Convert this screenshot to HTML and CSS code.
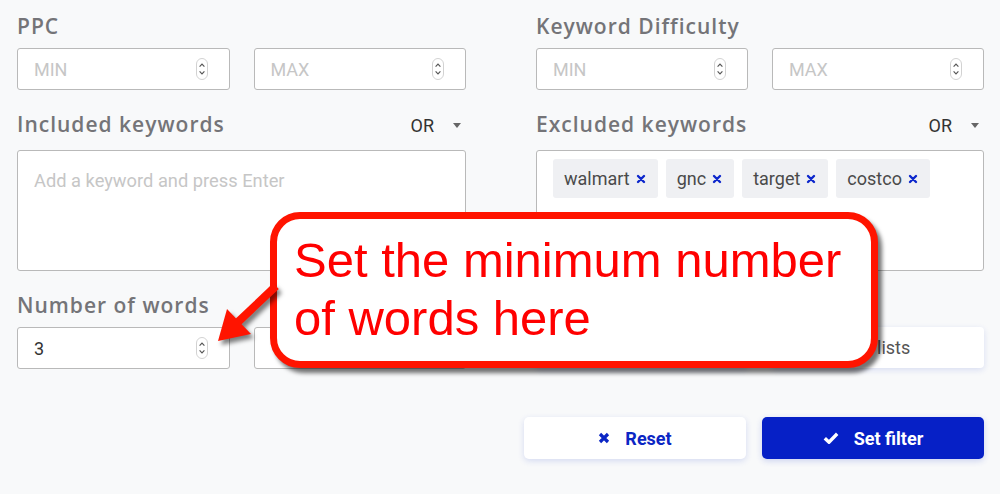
FILE: index.html
```html
<!DOCTYPE html>
<html lang="en">
<head>
    <meta charset="UTF-8">
    <meta name="viewport" content="width=device-width, initial-scale=1.0">
    <title>Keyword Filters</title>
    <link rel="stylesheet" href="styles.css">
</head>
<body>
    <svg width="0" height="0" class="defs">
        <symbol id="spin" viewBox="0 0 12 22">
            <rect x="0.5" y="0.5" width="11" height="21" rx="5.5" fill="#fff" stroke="#d2d2d2"/>
            <path d="M3.6 8.6 6 6.2 8.4 8.6M3.6 13.4 6 15.8 8.4 13.4" fill="none" stroke="#555" stroke-width="1.2"/>
        </symbol>
        <symbol id="cross" viewBox="0 0 10 10">
            <path d="M2 2 8 8M8 2 2 8" fill="none" stroke="currentColor" stroke-width="2.4" stroke-linecap="round"/>
        </symbol>
    </svg>

    <div class="filters">
        <div class="field">
            <label class="label">PPC</label>
            <div class="range">
                <div class="num-input"><span class="placeholder">MIN</span><svg class="spin"><use href="#spin"/></svg></div>
                <div class="num-input"><span class="placeholder">MAX</span><svg class="spin"><use href="#spin"/></svg></div>
            </div>
        </div>
        <div class="field">
            <label class="label">Keyword Difficulty</label>
            <div class="range">
                <div class="num-input"><span class="placeholder">MIN</span><svg class="spin"><use href="#spin"/></svg></div>
                <div class="num-input"><span class="placeholder">MAX</span><svg class="spin"><use href="#spin"/></svg></div>
            </div>
        </div>

        <div class="field">
            <div class="field-head">
                <label class="label">Included keywords</label>
                <div class="mode">OR <span class="caret"></span></div>
            </div>
            <div class="tag-box">
                <span class="placeholder">Add a keyword and press Enter</span>
            </div>
        </div>
        <div class="field">
            <div class="field-head">
                <label class="label">Excluded keywords</label>
                <div class="mode">OR <span class="caret"></span></div>
            </div>
            <div class="tag-box">
                <span class="tag">walmart <svg class="tag-x"><use href="#cross"/></svg></span>
                <span class="tag">gnc <svg class="tag-x"><use href="#cross"/></svg></span>
                <span class="tag">target <svg class="tag-x"><use href="#cross"/></svg></span>
                <span class="tag">costco <svg class="tag-x"><use href="#cross"/></svg></span>
            </div>
        </div>

        <div class="field">
            <label class="label">Number of words</label>
            <div class="range">
                <div class="num-input"><span class="value">3</span><svg class="spin"><use href="#spin"/></svg></div>
                <div class="num-input"></div>
            </div>
        </div>
        <div class="field">
            <div class="label-spacer"></div>
            <div class="range">
                <button class="list-btn"></button>
                <button class="list-btn"><span class="list-text">lists</span></button>
            </div>
        </div>
    </div>

    <div class="actions">
        <button class="btn btn-reset">
            <svg class="btn-icon" viewBox="0 0 12 12"><path d="M2 2 10 10M10 2 2 10" fill="none" stroke="currentColor" stroke-width="3.2"/></svg>
            Reset
        </button>
        <button class="btn btn-apply">
            <svg class="btn-icon check" viewBox="0 0 16 12"><path d="M1.8 6.2 6 10.2 14.2 1.8" fill="none" stroke="currentColor" stroke-width="3.4"/></svg>
            Set filter
        </button>
    </div>

    <!-- annotation bubble pointing at the words input -->
    <div class="callout">Set the minimum number of words here</div>
    <svg class="callout-arrow" width="80" height="80" viewBox="200 280 80 80">
        <path d="M276 286 238 322" stroke="#ff1400" stroke-width="8" fill="none"/>
        <polygon points="218,341 227,309 251,334" fill="#ff1400"/>
    </svg>
</body>
</html>
```

FILE: styles.css
```css
*{
    box-sizing: border-box;
}
body{
    margin: 0;
    padding: 14px 16px 0 17px;
    background-color: #f8f9fa;
    font-family: Roboto, "Liberation Sans", sans-serif;
    overflow: hidden;
    height: 494px;
    position: relative;
}
.defs{
    position: absolute;
}

.filters{
    display: grid;
    grid-template-columns: 449px 448px;
    column-gap: 70px;
    row-gap: 22px;
}

.label{
    display: block;
    font-family: "Open Sans", sans-serif;
    font-weight: 600;
    font-size: 21px;
    line-height: 24px;
    letter-spacing: 1px;
    color: #747478;
    margin-bottom: 10px;
}
.label-spacer{
    height: 24px;
    margin-bottom: 10px;
}

.range{
    display: flex;
    gap: 24px;
}
.num-input{
    flex: 1;
    height: 42px;
    background-color: #fff;
    border: 1px solid #b9b9b9;
    border-radius: 3px;
    display: flex;
    align-items: center;
    justify-content: space-between;
    padding: 0 21px 0 16px;
    font-size: 18px;
}
.placeholder{
    color: #c6c6c6;
}
.value{
    color: #333;
}
.spin{
    width: 12px;
    height: 22px;
}

.field-head{
    display: flex;
    justify-content: space-between;
    align-items: baseline;
    margin-bottom: 14px;
}
.field-head .label{
    margin-bottom: 0;
}
.mode{
    font-size: 18px;
    color: #333;
    display: flex;
    align-items: center;
    gap: 19px;
    padding: 0 4px 0 0;
    margin-right: 1px;
}
.caret{
    width: 0;
    height: 0;
    border-left: 4.5px solid transparent;
    border-right: 4.5px solid transparent;
    border-top: 5px solid #666;
}

.tag-box{
    height: 121px;
    background-color: #fff;
    border: 1px solid #b9b9b9;
    border-radius: 3px;
    padding: 8px 16px;
    font-size: 18px;
    display: flex;
    align-items: flex-start;
    gap: 8px;
}
.tag-box .placeholder{
    margin-top: 11px;
    font-size: 18.3px;
}
.tag{
    display: flex;
    align-items: center;
    gap: 6px;
    height: 39px;
    padding: 0 12px 0 11px;
    background-color: #eff0f3;
    border-radius: 3px;
    color: #4a4a4a;
}
.tag-x{
    width: 10px;
    height: 10px;
    color: #0d27cc;
}

button{
    all: unset;
    cursor: pointer;
}
.list-btn{
    flex: 1;
    height: 41px;
    background-color: #fff;
    border-radius: 4px;
    box-shadow: 0 2px 6px rgba(30, 60, 200, 0.14);
    font-size: 18px;
    color: #555;
    display: flex;
    align-items: center;
}
.list-text{
    margin-left: 105px;
}

.actions{
    display: flex;
    justify-content: flex-end;
    gap: 16px;
    margin-top: 48px;
}
.btn{
    width: 222px;
    height: 42px;
    border-radius: 5px;
    display: flex;
    align-items: center;
    justify-content: center;
    gap: 15px;
    font-size: 18px;
    font-weight: 700;
}
.btn-icon{
    width: 12px;
    height: 12px;
}
.btn-icon.check{
    width: 16px;
}
.btn-reset{
    background-color: #fff;
    color: #0b26c4;
    box-shadow: 0 2px 6px rgba(30, 60, 200, 0.16);
}
.btn-apply{
    background-color: #0620c6;
    color: #fff;
    box-shadow: 0 2px 6px rgba(30, 60, 200, 0.2);
}

.callout{
    position: absolute;
    left: 270px;
    top: 212px;
    width: 608px;
    height: 156px;
    padding: 12px 20px 0 17px;
    background-color: #fff;
    border: 7px solid #ff1400;
    border-radius: 30px;
    box-shadow: 4px 5px 4px rgba(0, 0, 0, 0.55);
    font-family: "Liberation Sans", Arial, sans-serif;
    font-size: 49px;
    line-height: 58px;
    color: #ff0000;
}
.callout-arrow{
    position: absolute;
    left: 200px;
    top: 280px;
    filter: drop-shadow(3px 4px 2px rgba(0, 0, 0, 0.5));
}
```
